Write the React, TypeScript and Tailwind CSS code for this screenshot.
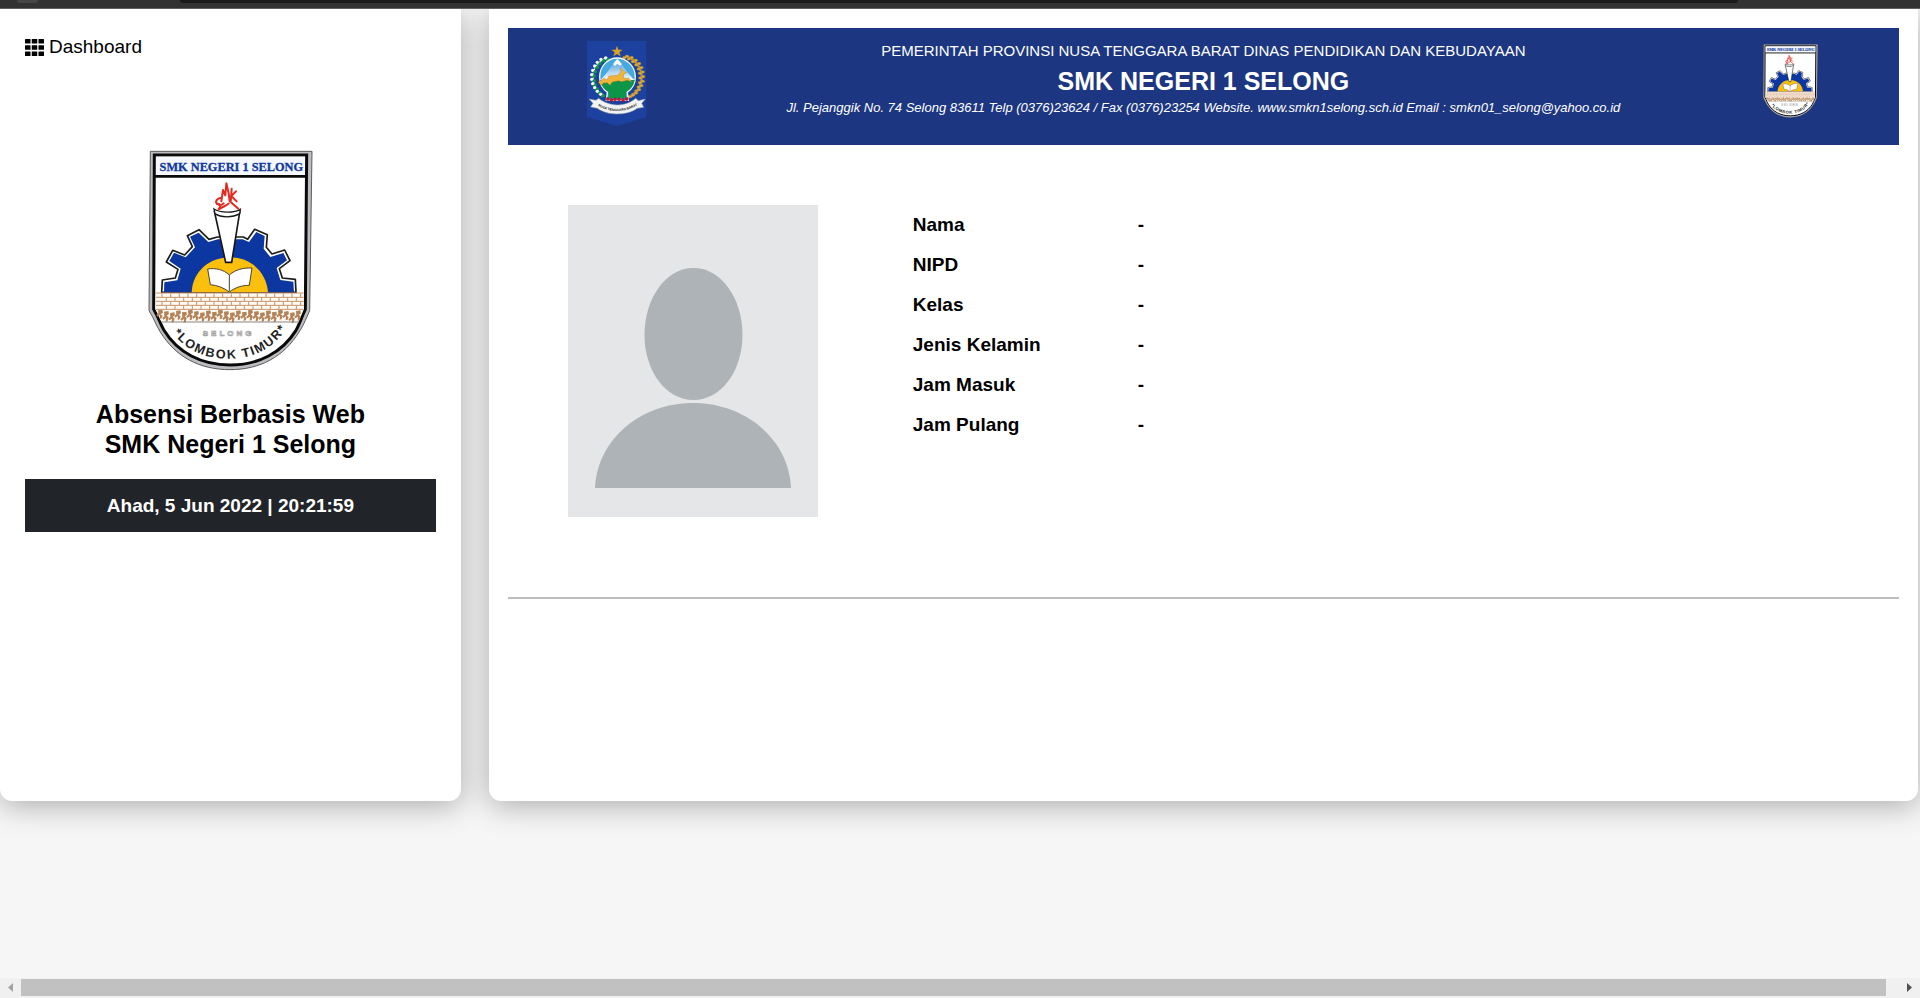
import React from "react";

function SchoolLogo({ className, id }: { className: string; id: string }) {
  const bricks: React.ReactElement[] = [];
  for (let row = 0; row < 4; row++) {
    for (let col = 0; col < 17; col++) {
      const x = 96 + col * 26 + (row % 2 ? 13 : 0);
      if (x < 515) bricks.push(<path key={`${row}-${col}`} d={`M${x} ${460 + row * 12}v12`} />);
    }
  }
  const stones: React.ReactElement[] = [];
  for (let i = 0; i < 24; i++) {
    const x = 84 + i * 18;
    const y = 511 + ((i * 7) % 5) * 2;
    stones.push(
      <path
        key={i}
        d={`M${x} ${y}l13 -2l2 9l-7 5l6 4l-3 ${8 + ((i * 5) % 7)}l-6 2l1 -12l-8 5l-3 -5l6 -5z`}
      />
    );
  }
  return (
    <svg viewBox="54 30 495 663" className={className} role="img" aria-label="Logo SMK Negeri 1 Selong">
      <path
        d="M61 34H546L539 512C526 542 518 560 507 576C462 650 390 689 300 689C208 689 136 650 91 576C79 558 72 535 57 512Z"
        fill="#bdbdc1"
        stroke="#5a5a5c"
        strokeWidth="3"
      />
      <path
        d="M73 45H530L526 508C513 535 508 554 498 571C456 638 386 675 300 675C214 675 143 638 102 571C91 552 86 533 71 508Z"
        fill="#fff"
        stroke="#0a0a0a"
        strokeWidth="9"
      />
      <path d="M78 50H525V104H78Z" fill="#f5f8ff" />
      <path d="M74 109H529" stroke="#0a0a0a" strokeWidth="8" />
      <text
        x="304"
        y="94"
        textAnchor="middle"
        fontFamily="'Liberation Serif', serif"
        fontWeight="700"
        fontSize="37"
        fill="#123a9c"
        stroke="#123a9c"
        strokeWidth="1"
      >
        SMK NEGERI 1 SELONG
      </text>
      <path
        d="M95 457L97 420L136 414L144 388L109 366L128 331L164 345L187 320L172 287L207 269L237 298L262 291L340 291L353 298L374 268L412 284L409 322L426 342L464 330L480 362L448 386L457 414L496 418L498 457Z"
        fill="#fff"
        stroke="#1c1c1c"
        strokeWidth="5"
        strokeLinejoin="round"
      />
      <path
        d="M102 457L103 427L142 421L152 386L118 363L132 338L167 352L195 322L180 290L206 278L235 306L264 298L338 298L357 306L379 276L404 288L401 326L421 351L460 339L471 361L440 384L451 420L490 425L492 457Z"
        fill="#0c36a0"
      />
      <path d="M185 457C188 393 240 352 300 352C362 352 410 397 414 457Z" fill="#fbc00e" />
      <path
        d="M233 387C257 383 281 389 298 405C317 388 341 383 366 384L358 436C336 436 316 442 298 456C281 443 262 436 241 434Z"
        fill="#fff"
        stroke="#4b4330"
        strokeWidth="3"
        strokeLinejoin="round"
      />
      <path d="M298 405V454" stroke="#4b4330" strokeWidth="3" />
      <path d="M254 218C275 232 310 232 329 217L305 367H287Z" fill="#fff" stroke="#171717" strokeWidth="5" />
      <path d="M252 207C270 219 313 219 331 208L329 221C306 234 273 233 255 221Z" fill="#fff" stroke="#171717" strokeWidth="4" />
      <path
        d="M266 207C276 198 268 190 261 192C254 184 262 173 275 173M274 184L279 150L286 166L289 130L296 160L299 184M305 146L302 186M318 154L304 168L320 184M262 192C268 196 275 196 281 190M302 186L325 206M267 208C278 199 289 198 296 191"
        fill="none"
        stroke="#e32b22"
        strokeWidth="6"
        strokeLinecap="round"
        strokeLinejoin="round"
      />
      <path d="M78 459H521V508L506 545H94L77 508Z" fill="#fffaf3" />
      <g stroke="#c4936a" strokeWidth="3" fill="none">
        <path d="M78 459H521M78 472H521M78 484H521M78 496H521M78 508H521" />
        {bricks}
      </g>
      <g fill="#b3835a">{stones}</g>
      <path d="M94 546H507" stroke="#8b8580" strokeWidth="3" />
      <text
        x="296"
        y="589"
        textAnchor="middle"
        fontFamily="'Liberation Sans', sans-serif"
        fontWeight="700"
        fontSize="24"
        letterSpacing="9"
        fill="#fff"
        stroke="#999"
        strokeWidth="2"
      >
        SELONG
      </text>
      <path id={id} d="M118 566C164 634 228 656 296 656C370 656 434 628 480 548" fill="none" />
      <text fontFamily="'Liberation Sans', sans-serif" fontWeight="700" fontSize="38" letterSpacing="5" fill="#222">
        <textPath href={`#${id}`} startOffset="50%" textAnchor="middle">
          *LOMBOK TIMUR*
        </textPath>
      </text>
    </svg>
  );
}

function ProvinceLogo({ className }: { className: string }) {
  const left = [
    [108, 84], [94, 88], [83, 97], [75, 108], [69, 121], [66, 134], [66, 148], [69, 161], [75, 173], [83, 184], [93, 193],
  ];
  const right = [
    [164, 79], [178, 83], [190, 91], [200, 101], [207, 113], [211, 126], [212, 140], [211, 154], [207, 167], [200, 179], [191, 189], [181, 196],
  ];
  return (
    <svg viewBox="48 33 180 255" className={className} role="img" aria-label="Lambang Provinsi Nusa Tenggara Barat">
      <defs>
        <linearGradient id="mountain" x1="0" y1="0" x2="0" y2="1">
          <stop offset="0" stopColor="#3a97d6" />
          <stop offset="1" stopColor="#f4fafd" />
        </linearGradient>
      </defs>
      <path d="M48 33H226V261L137 288L48 261Z" fill="#1c419f" />
      <path
        d="M138 47L142 59L155 59L145 67L149 79L138 72L127 79L131 67L121 59L134 59Z"
        fill="#dba31f"
      />
      <path d="M109 82C78 95 65 120 66 145C68 170 80 187 98 196" fill="none" stroke="#e8f3e8" strokeWidth="4" />
      <path d="M164 79C198 90 213 118 212 144C211 170 199 187 180 197" fill="none" stroke="#c8962e" strokeWidth="7" />
      {left.map(([x, y], i) => (
        <g key={i}>
          <circle cx={x - 4} cy={y} r="5" fill="#f4f8f4" />
          <circle cx={x + 4} cy={y + 4} r="5" fill="#18934b" />
          <circle cx={x - 1} cy={y + 7} r="3" fill="#18934b" />
        </g>
      ))}
      {right.map(([x, y], i) => (
        <g key={i} fill="#dcae45" stroke="#8d6a20" strokeWidth="1">
          <ellipse cx={x + 4} cy={y} rx="6" ry="4" />
          <ellipse cx={x - 4} cy={y + 4} rx="6" ry="4" />
        </g>
      ))}
      <path
        d="M138 84C111 84 86 108 86 141C86 165 97 178 109 187L106 211H172L169 187C181 178 193 165 193 141C193 108 166 84 138 84Z"
        fill="#45a8de"
        stroke="#f4fafc"
        strokeWidth="4"
      />
      <path d="M89 150L112 122L129 98L139 86L150 98L165 122L190 150Z" fill="url(#mountain)" />
      <path d="M126 103L139 86L153 103L146 107L139 101L132 108Z" fill="#fff" />
      <path d="M88 150H191C189 168 179 177 166 185L164 205H113L112 185C98 177 90 168 88 150Z" fill="#0d9648" />
      <path
        d="M82 157L98 145L108 149L114 138L140 136L150 126L148 113L157 122L167 128L158 133L157 144L173 145L184 156L169 151L151 155L143 152L124 156L117 166L109 158L98 159L90 166Z"
        fill="#f0b43c"
        stroke="#a3681d"
        strokeWidth="1"
      />
      <g fill="#cf1835" stroke="#6d1624" strokeWidth="1">
        <circle cx="110" cy="207" r="5" />
        <circle cx="121" cy="210" r="5" />
        <circle cx="132" cy="208" r="5" />
        <circle cx="144" cy="208" r="5" />
        <circle cx="156" cy="210" r="5" />
        <circle cx="167" cy="207" r="5" />
      </g>
      <path
        d="M54 207L75 211L83 205C100 219 122 225 139 225C158 225 181 218 194 205L202 212L223 207L212 220L218 232L199 235C181 248 158 252 138 252C117 252 96 247 79 235L59 231L66 220Z"
        fill="#f3f3f3"
        stroke="#9aa0a8"
        strokeWidth="1.5"
      />
      <path id="ribbon" d="M76 224C114 250 166 250 204 222" fill="none" />
      <text fontFamily="'Liberation Sans', sans-serif" fontWeight="700" fontSize="10" fill="#222">
        <textPath href="#ribbon" startOffset="50%" textAnchor="middle">
          NUSA TENGGARA BARAT
        </textPath>
      </text>
    </svg>
  );
}

function GridIcon() {
  return (
    <svg viewBox="0 0 19 17" className="h-[17px] w-[19px]" aria-hidden="true">
      {[0, 6.75, 13.5].map((x) =>
        [0, 6.25, 12.5].map((y) => <rect key={`${x}-${y}`} x={x} y={y} width="5.5" height="4.5" rx="0.5" />)
      )}
    </svg>
  );
}

function Avatar() {
  return (
    <svg viewBox="0 0 250 312" className="h-[312px] w-[250px] shrink-0 bg-[#e4e6e8]" role="img" aria-label="Foto siswa">
      <path
        d="M125.500 63C153 63 174.500 93 174.500 130C174.500 166 153 195 125.500 195C98 195 76.500 166 76.500 130C76.500 93 98 63 125.500 63Z"
        fill="#aeb3b7"
      />
      <path d="M27 283C29 235 72 198 125 198C178 198 221 235 223 283Z" fill="#aeb3b7" />
    </svg>
  );
}

const fields = [
  ["Nama", "-"],
  ["NIPD", "-"],
  ["Kelas", "-"],
  ["Jenis Kelamin", "-"],
  ["Jam Masuk", "-"],
  ["Jam Pulang", "-"],
];

export default function App() {
  return (
    <div className="flex min-h-screen flex-col bg-[#f6f6f6] font-['Liberation_Sans',Arial,sans-serif] text-black">
      <div className="relative z-10 flex h-[9px] shrink-0 items-start overflow-hidden border-b border-[#606060] bg-[#323232] pr-[182px] pl-[17px]">
        <div className="h-[3px] w-[21px] shrink-0 rounded-b-full bg-[#464646]" />
        <div className="ml-[142px] h-[3px] flex-1 rounded-b-lg bg-[#1a1a1a]" />
      </div>

      <div className="flex flex-1 gap-7 overflow-hidden pb-[177px]">
        <aside className="flex w-[24%] flex-col rounded-b-xl bg-white px-[25px] pt-[26px] shadow-[0_5px_30px_rgba(0,0,0,0.3)]">
          <a href="#dashboard" className="flex items-center gap-[5px] self-start text-[19px] leading-6">
            <GridIcon />
            Dashboard
          </a>
          <SchoolLogo id="motto-large" className="mt-[91px] h-[221px] w-[165px] self-center" />
          <h1 className="mt-7 text-center text-[25px] leading-[30px] font-bold">
            Absensi Berbasis Web
            <br />
            SMK Negeri 1 Selong
          </h1>
          <p className="mt-5 bg-[#212529] py-4 text-center text-[19px] leading-[21px] font-bold text-white">
            Ahad, 5 Jun 2022 | 20:21:59
          </p>
        </aside>

        <main className="mr-0.5 flex-1 rounded-b-xl bg-white px-[19px] pt-[19px] shadow-[0_5px_30px_rgba(0,0,0,0.3)]">
          <header className="grid h-[117px] grid-cols-[218px_1fr_218px] bg-[#1c3681] text-center text-white">
            <ProvinceLogo className="mt-[13px] h-[85px] w-[60px] justify-self-center" />
            <div className="pt-[11px] whitespace-nowrap">
              <p className="text-[15px] leading-6">
                PEMERINTAH PROVINSI NUSA TENGGARA BARAT DINAS PENDIDIKAN DAN KEBUDAYAAN
              </p>
              <h2 className="text-[25px] leading-9 font-bold">SMK NEGERI 1 SELONG</h2>
              <p className="text-[13px] leading-[18px] italic">
                Jl. Pejanggik No. 74 Selong 83611 Telp (0376)23624 / Fax (0376)23254 Website. www.smkn1selong.sch.id
                Email : smkn01_selong@yahoo.co.id
              </p>
            </div>
            <SchoolLogo id="motto-small" className="mt-4 h-[74px] w-[55px] justify-self-center" />
          </header>

          <section className="flex items-start gap-[95px] px-[60px] pt-[60px]">
            <Avatar />
            <table className="text-left text-[19px] leading-10">
              <tbody>
                {fields.map(([label, value]) => (
                  <tr key={label}>
                    <th scope="row" className="w-[225px] p-0 font-bold">
                      {label}
                    </th>
                    <td className="p-0 font-bold">{value}</td>
                  </tr>
                ))}
              </tbody>
            </table>
          </section>

          <hr className="mt-20 border-t-2 border-[#bdbdbd]" />
        </main>
      </div>

      <div className="flex h-5 shrink-0 items-center bg-[#f0f0f0] pb-px" aria-hidden="true">
        <svg viewBox="0 0 21 17" className="h-[17px] w-[21px]">
          <path d="M13 4V13L8 8.500Z" fill="#a3a3a3" />
        </svg>
        <div className="h-[17px] flex-1 bg-[#c1c1c1]" />
        <svg viewBox="0 0 34 17" className="h-[17px] w-[34px]">
          <path d="M21 4V13L26 8.500Z" fill="#505050" />
        </svg>
      </div>
    </div>
  );
}
